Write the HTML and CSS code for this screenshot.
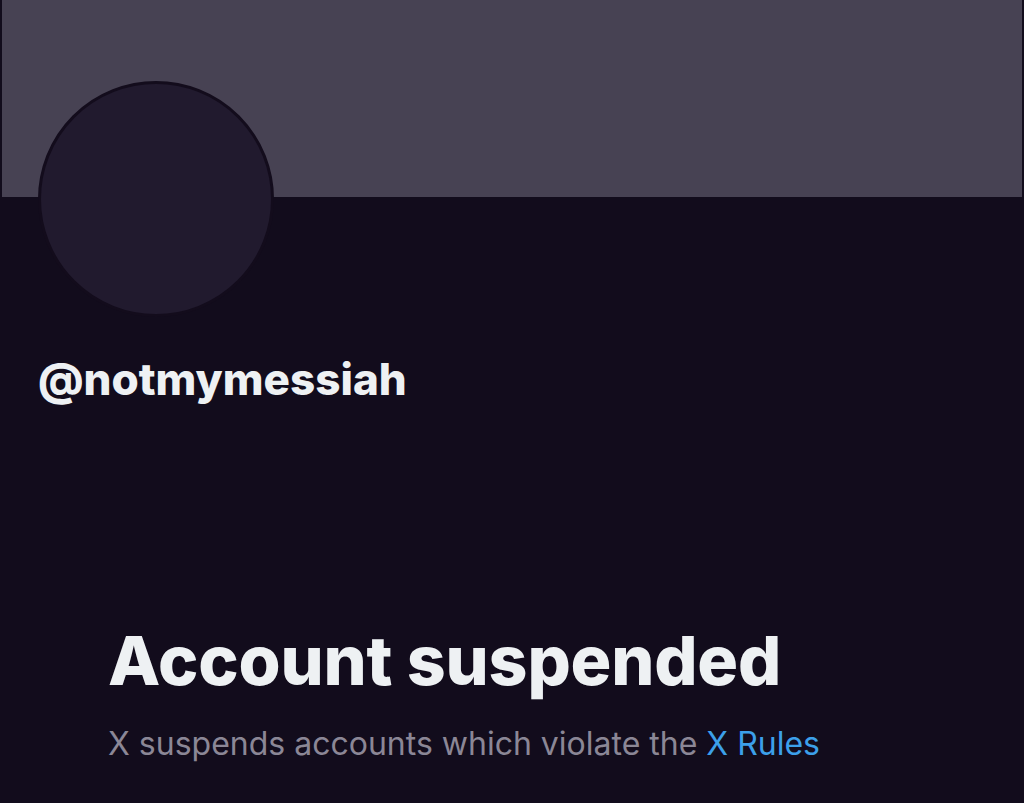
FILE: index.html
```html
<!DOCTYPE html>
<html>
<head>
<meta charset="utf-8">
<link rel="stylesheet" href="styles.css">
</head>
<body>
<div class="page">
  <div class="banner"></div>
  <div class="profile">
    <div class="avatar"></div>
    <div class="handle">@notmymessiah</div>
  </div>
  <div class="notice">
    <h1 class="title">Account suspended</h1>
    <p class="desc">X suspends accounts which violate the <a class="link" href="#">X Rules</a></p>
  </div>
</div>
</body>
</html>
```

FILE: styles.css
```css
html, body {
  margin: 0;
  padding: 0;
  background: #120c1c;
}
.page {
  width: 1024px;
  height: 803px;
  overflow: hidden;
  background: #120c1c;
  font-family: Inter, "Noto Sans", sans-serif;
}
.banner {
  height: 197px;
  margin: 0 2px;
  background: #474253;
}
.profile {
  padding-left: 38px;
}
.avatar {
  width: 230px;
  height: 230px;
  margin-top: -116px;
  border-radius: 50%;
  background: #211a2e;
  border: 3px solid #130c1c;
}
.handle {
  margin-top: 36px;
  font-size: 44px;
  font-weight: 800;
  color: #eef1f3;
  line-height: 52px;
}
.notice {
  padding-left: 108px;
  margin-top: 215px;
}
.title {
  margin: 0;
  font-size: 68px;
  font-weight: 800;
  line-height: 80px;
  color: #eef1f3;
  letter-spacing: -0.2px;
}
.desc {
  margin: 24px 0 0;
  font-size: 32px;
  line-height: 40px;
  font-weight: 400;
  color: #8b8796;
}
.link {
  color: #3ca0ea;
  text-decoration: none;
}
```
